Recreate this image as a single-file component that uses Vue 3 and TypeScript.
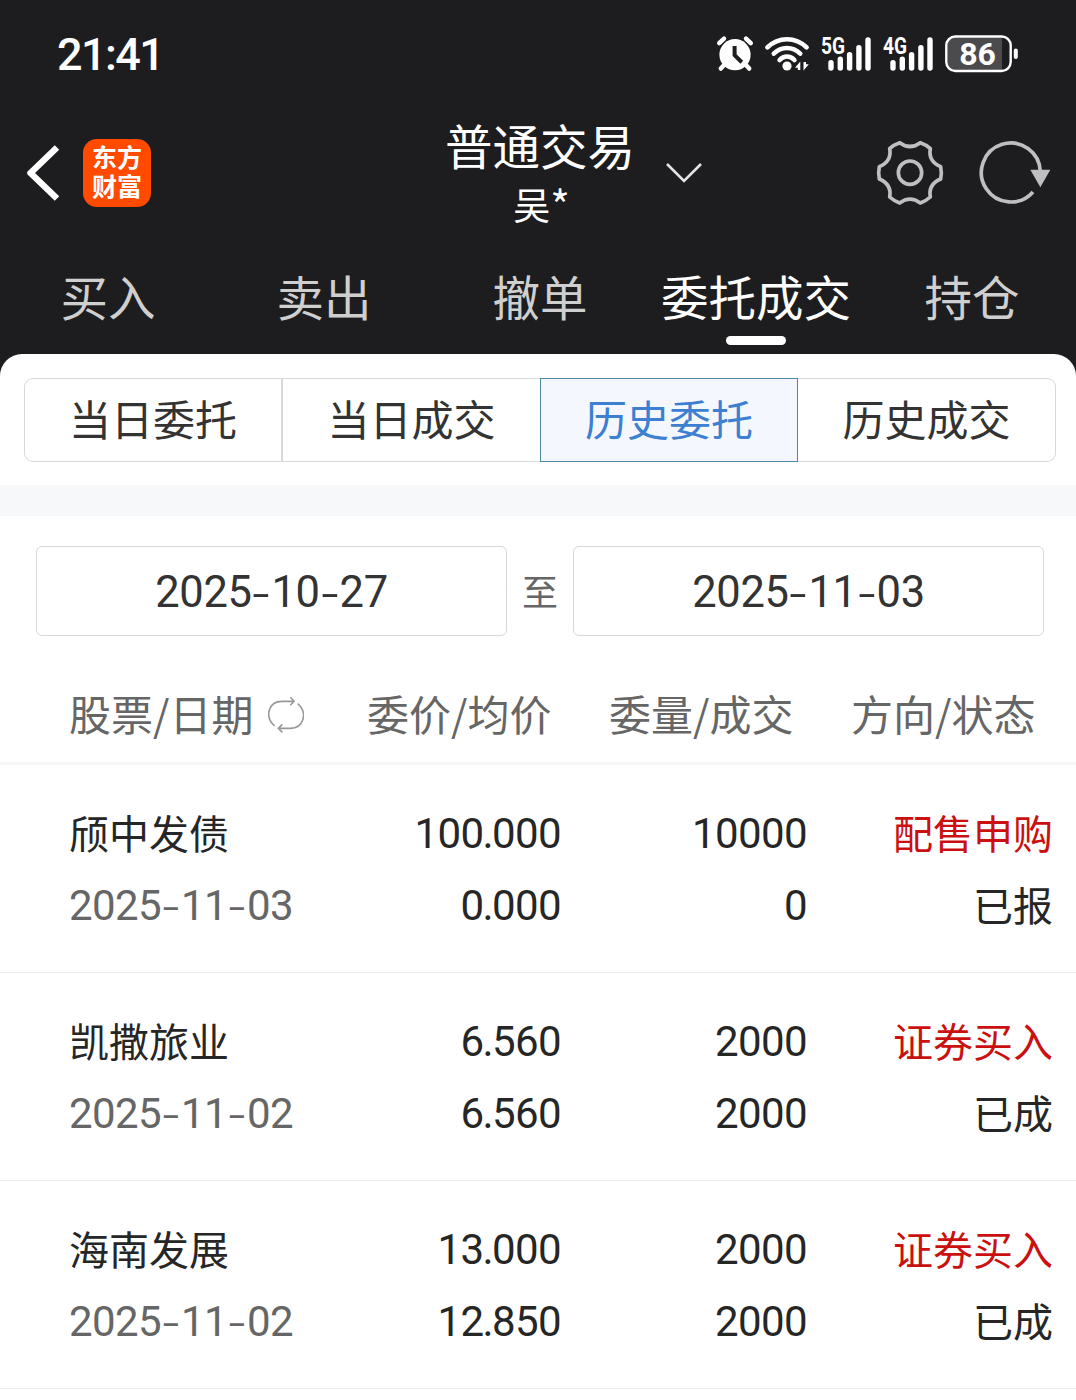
<script setup lang="ts">
interface Order {
  name: string
  date: string
  price: string
  avg: string
  volume: string
  filled: string
  side: string
  status: string
}

const networks = ['5G', '4G']
const bars = [
  { x: 12, top: 25.5 },
  { x: 21.3, top: 22 },
  { x: 30.6, top: 17.5 },
  { x: 39.9, top: 10.5 },
  { x: 49, top: 2.7 },
]
const tabs = ['买入', '卖出', '撤单', '委托成交', '持仓']
const activeTab = '委托成交'
const segments = ['当日委托', '当日成交', '历史委托', '历史成交']
const activeSegment = '历史委托'
const range = ['2025-10-27', '2025-11-03']
const columns = ['股票/日期', '委价/均价', '委量/成交', '方向/状态']

const orders: Order[] = [
  { name: '颀中发债', date: '2025-11-03', price: '100.000', avg: '0.000', volume: '10000', filled: '0', side: '配售申购', status: '已报' },
  { name: '凯撒旅业', date: '2025-11-02', price: '6.560', avg: '6.560', volume: '2000', filled: '2000', side: '证券买入', status: '已成' },
  { name: '海南发展', date: '2025-11-02', price: '13.000', avg: '12.850', volume: '2000', filled: '2000', side: '证券买入', status: '已成' },
]
</script>

<template>
  <div class="page">
    <header class="top">
      <div class="status">
        <span class="clock">21:41</span>
        <div class="status-icons">
          <svg class="alarm" width="38" height="38" viewBox="0 0 38 38">
            <g stroke="#fff" stroke-width="4.4" stroke-linecap="round" fill="none">
              <path d="M3.2 8.2 8 3.6M34.8 8.2 30 3.6M9 29l-4.2 4.6M29 29l4.2 4.6" />
            </g>
            <circle cx="19" cy="19.7" r="15.6" fill="#fff" />
            <path d="M18.6 11v9.2l7.2 7" fill="none" stroke="#1d1d1f" stroke-width="4" />
          </svg>
          <svg class="wifi" width="46" height="38" viewBox="0 0 46 38">
            <g fill="none" stroke="#fff" stroke-width="4.6" stroke-linecap="round">
              <path d="M3.4 12.4C14.5 1.5 31.5 1.5 42.6 12.4" />
              <path d="M9.8 18.6C17.5 11.2 28.5 11.2 36.2 18.6" />
              <path d="M15.6 25C20 20.4 26 20.4 30.4 25" />
            </g>
            <circle cx="23" cy="31" r="4.6" fill="#fff" />
            <path d="M31 32.8 36.3 26.5V35h-2.5v-2.2zM44.8 29.2 39.5 35.5V27H42v2.2z" fill="#fff" />
          </svg>
          <svg v-for="net in networks" :key="net" class="signal" width="54" height="46" viewBox="0 -4 54 46">
            <path
              v-for="bar in bars"
              :key="bar.x"
              :d="`M${bar.x} ${bar.top + 2.2}V33`"
              stroke="#fff"
              stroke-width="5.4"
              stroke-linecap="round"
            />
            <text x="2" y="18.500" textLength="24" lengthAdjust="spacingAndGlyphs" class="net">{{ net }}</text>
          </svg>
          <svg class="battery" width="74" height="38" viewBox="0 0 74 38">
            <rect x="1.5" y="1.7" width="64" height="34" rx="9" fill="#1d1d1f" />
            <path d="M10 2.5H57V35H10Q2.5 35 2.5 27V10Q2.5 2.5 10 2.5" fill="#4b4b4d" />
            <rect x="1.3" y="1.5" width="64.4" height="34.5" rx="9" fill="none" stroke="#fff" stroke-width="2.4" />
            <rect x="68.8" y="13.5" width="4" height="10.5" rx="2" fill="#fff" />
            <text x="32.5" y="30" text-anchor="middle" class="level">86</text>
          </svg>
        </div>
      </div>

      <div class="nav">
        <div class="nav-left">
          <svg width="36" height="58" viewBox="0 0 36 58">
            <path d="M32 3.5 5.5 29 32 54.5" fill="none" stroke="#fff" stroke-width="6.4" stroke-linejoin="round" />
          </svg>
          <div class="logo">东方财富</div>
        </div>
        <div class="account">
          <div class="title">普通交易</div>
          <div class="user">吴<span class="mask">*</span></div>
        </div>
        <svg class="chevron" width="38" height="22" viewBox="0 0 38 22">
          <path d="M2 2 19 19 36 2" fill="none" stroke="#e4e4e4" stroke-width="2.6" />
        </svg>
        <div class="actions">
          <svg width="68" height="68" viewBox="50 54 204 204">
            <g fill="none" stroke="#bfbfbf" stroke-width="11" stroke-linejoin="round">
              <path d="M121 65Q152 88 183 65Q201 71 213 83Q206 121 244 137Q248 156 244 174Q206 190 213 228Q201 239 183 246Q152 223 121 246Q103 239 91 228Q98 190 60 174Q56 156 60 137Q98 121 91 83Q103 71 121 65Z" />
              <circle cx="152" cy="155" r="35" />
            </g>
          </svg>
          <svg width="74" height="68" viewBox="354 54 222 204">
            <path d="M541 152A88.5 88.5 0 1 0 519 213" fill="none" stroke="#bfbfbf" stroke-width="11" />
            <path d="M511 146H571L541 199Z" fill="#bfbfbf" />
          </svg>
        </div>
      </div>

      <nav class="tabs">
        <div v-for="tab in tabs" :key="tab" class="tab" :class="{ active: tab === activeTab }">{{ tab }}</div>
      </nav>
    </header>

    <main class="sheet">
      <div class="segments">
        <div v-for="seg in segments" :key="seg" class="segment" :class="{ active: seg === activeSegment }">{{ seg }}</div>
      </div>
      <div class="band"></div>
      <div class="range">
        <div class="date-box num"><template v-for="(part, i) in range[0].split('-')" :key="i"><span v-if="i" class="dash">-</span>{{ part }}</template></div>
        <span class="to">至</span>
        <div class="date-box num"><template v-for="(part, i) in range[1].split('-')" :key="i"><span v-if="i" class="dash">-</span>{{ part }}</template></div>
      </div>

      <div class="columns">
        <div v-for="(col, i) in columns" :key="col" class="column">
          {{ col }}
          <svg v-if="i === 0" class="swap" width="36" height="38" viewBox="24 18 108 114">
            <g fill="none" stroke="#999" stroke-width="4.8">
              <path d="M44 108C12 80 26 34 66 34H101M91 22 102 34 91 46" />
              <path d="M113 41C145 69 130 115 91 115H55M67 103 55 115 67 127" />
            </g>
          </svg>
        </div>
      </div>

      <div v-for="order in orders" :key="order.name" class="order">
        <div class="han">{{ order.name }}</div>
        <div class="num right"><template v-for="(part, i) in order.price.split('.')" :key="i"><span v-if="i" class="dot">.</span>{{ part }}</template></div>
        <div class="num right">{{ order.volume }}</div>
        <div class="han right side">{{ order.side }}</div>
        <div class="num date"><template v-for="(part, i) in order.date.split('-')" :key="i"><span v-if="i" class="dash">-</span>{{ part }}</template></div>
        <div class="num right"><template v-for="(part, i) in order.avg.split('.')" :key="i"><span v-if="i" class="dot">.</span>{{ part }}</template></div>
        <div class="num right">{{ order.filled }}</div>
        <div class="han right">{{ order.status }}</div>
      </div>
    </main>
  </div>
</template>

<style>
body {
  background: #fff;
}
</style>

<style scoped>
.page {
  width: 1076px;
  height: 1400px;
  overflow: hidden;
  background: #1d1d1f;
  font-family: 'Noto Sans CJK SC', sans-serif;
  display: flex;
  flex-direction: column;
}
.page * {
  box-sizing: border-box;
}
svg {
  display: block;
  flex: none;
}
.top {
  height: 354px;
  flex: none;
  color: #fff;
}
.status {
  height: 108px;
  padding: 0 57px 0 57px;
  display: flex;
  justify-content: space-between;
  align-items: center;
}
.clock {
  font: 500 45px/60px Roboto, sans-serif;
  letter-spacing: -1.6px;
  padding-top: 2px;
}
.status-icons {
  display: flex;
  align-items: center;
}
.wifi {
  margin-left: 10px;
}
.signal {
  margin-left: 8px;
}
.wifi + .signal {
  margin-left: 9px;
}
.battery {
  margin-left: 10px;
}
.net {
  font: 700 23px Roboto, sans-serif;
  fill: #fff;
  stroke: #1d1d1f;
  stroke-width: 3px;
  paint-order: stroke;
}
.level {
  font: 700 32px Roboto, sans-serif;
  fill: #fff;
}
.nav {
  height: 129px;
  display: flex;
  align-items: center;
}
.nav-left {
  width: 445px;
  padding-left: 25px;
  display: flex;
  align-items: center;
  gap: 22px;
}
.logo {
  width: 68px;
  height: 68px;
  padding: 3px 9px 0;
  border-radius: 14px;
  background: #ff4a00;
  font-weight: 700;
  font-size: 25px;
  line-height: 29px;
}
.account {
  width: 190px;
  text-align: center;
  display: flex;
  flex-direction: column;
  align-items: center;
}
.title {
  font-size: 47.5px;
  line-height: 62px;
  white-space: nowrap;
}
.user {
  font-size: 37px;
  line-height: 56px;
  display: flex;
}
.mask {
  font-size: 42px;
  margin-right: -3px;
}
.chevron {
  margin-left: 30px;
}
.actions {
  margin-left: auto;
  padding-right: 24px;
  display: flex;
  gap: 34px;
}
.tabs {
  height: 117px;
  display: grid;
  grid-template-columns: repeat(5, 216px);
  font-size: 47.5px;
  line-height: 70px;
  padding-top: 24px;
}
.tab {
  text-align: center;
  color: #cfcfcf;
  display: flex;
  flex-direction: column;
  align-items: center;
  white-space: nowrap;
}
.tab.active {
  color: #fff;
}
.tab.active::after {
  content: '';
  width: 60px;
  height: 9px;
  border-radius: 4.5px;
  background: #fff;
  margin-top: 5px;
}
.sheet {
  flex: 1;
  background: #fff;
  border-radius: 22px 22px 0 0;
  padding-top: 24px;
}
.segments {
  margin: 0 20px 0 24px;
  height: 84px;
  display: grid;
  grid-template-columns: repeat(4, 1fr);
}
.segment {
  border: 1px solid #d6d9da;
  display: flex;
  align-items: center;
  justify-content: center;
  font-size: 42px;
  line-height: 60px;
  padding-bottom: 4px;
  color: #333;
}
.segment:first-child {
  border-radius: 9px 0 0 9px;
}
.segment:last-child {
  border-radius: 0 9px 9px 0;
  border-left: 0;
}
.segment:nth-child(2) {
  border-right: 0;
}
.segment.active {
  background: #f4f8fe;
  border-color: #4f86a6;
  color: #3d7fd0;
}
.band {
  margin-top: 23px;
  height: 31px;
  background: #f7f8fa;
}
.range {
  margin: 30px 32px 0 36px;
  display: grid;
  grid-template-columns: 471px 66px 471px;
  align-items: center;
}
.date-box {
  height: 90px;
  border: 1px solid #d8d8d8;
  border-radius: 6px;
  text-align: center;
  line-height: 91px;
  color: #333;
}
.to {
  text-align: center;
  font-size: 36px;
  line-height: 50px;
  padding-bottom: 3px;
  color: #666;
}
.num {
  font-family: Roboto, sans-serif;
  font-size: 42px;
  letter-spacing: -0.6px;
}
.date-box.num {
  font-size: 43.5px;
  letter-spacing: -0.4px;
}
.dash {
  display: inline-block;
  width: 20px;
  line-height: 1;
  text-align: center;
  letter-spacing: 0;
  transform: translateY(1px) scale(1.4, 0.9);
}
.dot {
  margin-left: -1px;
  margin-right: -1px;
}
.columns {
  height: 129px;
  padding: 27px 0 0 69px;
  border-bottom: 3px solid #f6f6f6;
  display: grid;
  grid-template-columns: 298px 242px 242px 1fr;
  font-size: 42px;
  line-height: 98px;
  color: #666;
}
.column {
  display: flex;
  align-items: center;
  gap: 15px;
  white-space: nowrap;
}
.swap {
  margin-top: 5px;
}
.order {
  height: 208px;
  padding: 33px 0 0 69px;
  border-bottom: 1px solid #ebebeb;
  display: grid;
  grid-template-columns: repeat(4, 246px);
  grid-auto-rows: 72px;
  line-height: 72px;
  font-size: 40px;
  color: #262626;
}
.han {
  line-height: 68px;
}
.right {
  text-align: right;
}
.date {
  color: #666;
}
.side {
  color: #cb1010;
}
</style>
